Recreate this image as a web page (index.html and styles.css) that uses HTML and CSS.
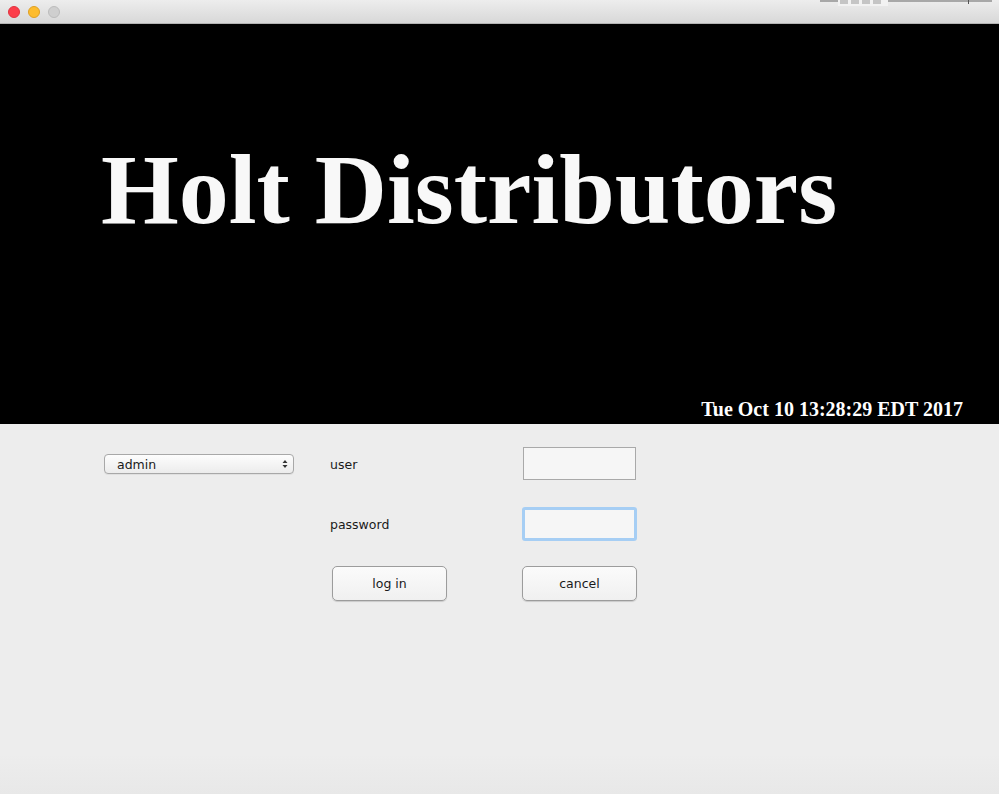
FILE: index.html
```html
<!DOCTYPE html>
<html>
<head>
<meta charset="utf-8">
<link rel="stylesheet" href="styles.css">
</head>
<body>
<div class="window">
  <div class="titlebar">
    <div class="lights">
      <span class="light red"></span>
      <span class="light yellow"></span>
      <span class="light gray"></span>
    </div>
    <div class="tb-line"></div>
    <div class="tb-tools">
      <span class="tool grid"></span>
      <span class="tool t2"></span>
      <span class="tool t3"></span>
      <span class="tool t4"></span>
    </div>
    <div class="tb-mark"></div>
  </div>
  <div class="banner">
    <h1 class="title">Holt Distributors</h1>
    <div class="date">Tue Oct 10 13:28:29 EDT 2017</div>
  </div>
  <div class="form">
    <div class="combo"><span>admin</span><span class="arrows"><svg width="6" height="10" viewBox="0 0 6 10"><path d="M0.5 4 L3 1 L5.5 4 Z M0.5 6 L3 9 L5.5 6 Z" fill="#333"/></svg></span></div>
    <div class="label">user</div>
    <div class="field"></div>
    <div class="label r2">password</div>
    <div class="field focus r2"></div>
    <button class="btn login">log in</button>
    <button class="btn cancel">cancel</button>
  </div>
</div>
</body>
</html>
```
FILE: styles.css
```css
html, body {
  margin: 0;
  padding: 0;
  width: 999px;
  height: 794px;
  overflow: hidden;
  background: #ececec;
}
.window {
  display: flex;
  flex-direction: column;
  height: 794px;
}
.titlebar {
  height: 23px;
  border-bottom: 1px solid #b4b4b4;
  background: linear-gradient(#ededed, #d8d8d8);
  display: flex;
  align-items: center;
  position: relative;
}
.lights {
  display: flex;
  gap: 8px;
  padding-left: 8px;
}
.light {
  width: 12px;
  height: 12px;
  border-radius: 50%;
  box-sizing: border-box;
}
.red { background: #fc3d4a; border: 1px solid #e0333f; }
.yellow { background: #fdbc2d; border: 1px solid #dfa023; }
.gray { background: #cfcfcf; border: 1px solid #bcbcbc; }
.tb-line {
  position: absolute;
  left: 820px;
  top: 0;
  width: 172px;
  height: 2px;
  background: #a8a8a8;
}
.tb-tools {
  position: absolute;
  left: 838px;
  top: 0;
  width: 50px;
  height: 6px;
  background: #f2f2f2;
  display: flex;
  gap: 3px;
  padding: 0 0 0 2px;
  box-sizing: border-box;
}
.tool {
  width: 8px;
  height: 4px;
  background: #a0a0a0;
  opacity: 0.55;
}
.tb-mark {
  position: absolute;
  left: 968px;
  top: 0;
  width: 1px;
  height: 4px;
  background: #555;
}
.banner {
  height: 400px;
  background: #000;
  display: flex;
  flex-direction: column;
}
.title {
  margin: 0;
  padding: 111px 0 0 101px;
  font-family: "Liberation Serif", serif;
  font-weight: bold;
  font-size: 100px;
  line-height: 110px;
  color: #f8f8f8;
}
.date {
  margin-top: auto;
  align-self: flex-end;
  padding: 0 36px 4px 0;
  font-family: "Liberation Serif", serif;
  font-weight: bold;
  font-size: 20px;
  line-height: 22px;
  color: #fff;
}
.form {
  flex: 1;
  background: linear-gradient(#ededed 0, #ededed 330px, #e8e8e8 370px);
  display: grid;
  grid-template-columns: 190px 36px 192px 115px;
  grid-template-rows: 34px 34px 35px;
  row-gap: 26px;
  padding: 23px 0 0 104px;
  align-content: start;
  font-family: "DejaVu Sans", sans-serif;
  font-size: 12.5px;
  color: #1a1a1a;
}
.combo {
  grid-column: 1;
  grid-row: 1;
  align-self: center;
  height: 20px;
  box-sizing: border-box;
  border: 1px solid #a8a8a8;
  border-radius: 4px;
  background: linear-gradient(#fdfdfd, #ececec);
  display: flex;
  align-items: center;
  justify-content: space-between;
  padding: 0 5px 0 12px;
  box-shadow: 0 1px 0 rgba(0,0,0,0.05);
}
.arrows { display: flex; }
.label {
  grid-column: 3;
  grid-row: 1;
  align-self: center;
}
.label.r2 { grid-row: 2; }
.field {
  grid-column: 4;
  grid-row: 1;
  margin-left: 1px;
  width: 113px;
  height: 33px;
  box-sizing: border-box;
  border: 1px solid #a9a9a9;
  background: #f6f6f6;
}
.field.r2 {
  grid-row: 2;
  margin-left: 0;
  width: 115px;
  height: 34px;
  border: 3px solid #a6cef4;
  border-radius: 3px;
}
.btn {
  grid-row: 3;
  margin-top: -1px;
  width: 115px;
  height: 35px;
  box-sizing: border-box;
  border: 1px solid #9c9c9c;
  border-radius: 5px;
  background: linear-gradient(#fbfbfb, #f0f0f0);
  box-shadow: 0 1px 1px rgba(0,0,0,0.15);
  font-family: "DejaVu Sans", sans-serif;
  font-size: 12.5px;
  color: #1a1a1a;
  padding: 0;
}
.login {
  grid-column: 3;
  margin-left: 2px;
}
.cancel {
  grid-column: 4;
}
```
